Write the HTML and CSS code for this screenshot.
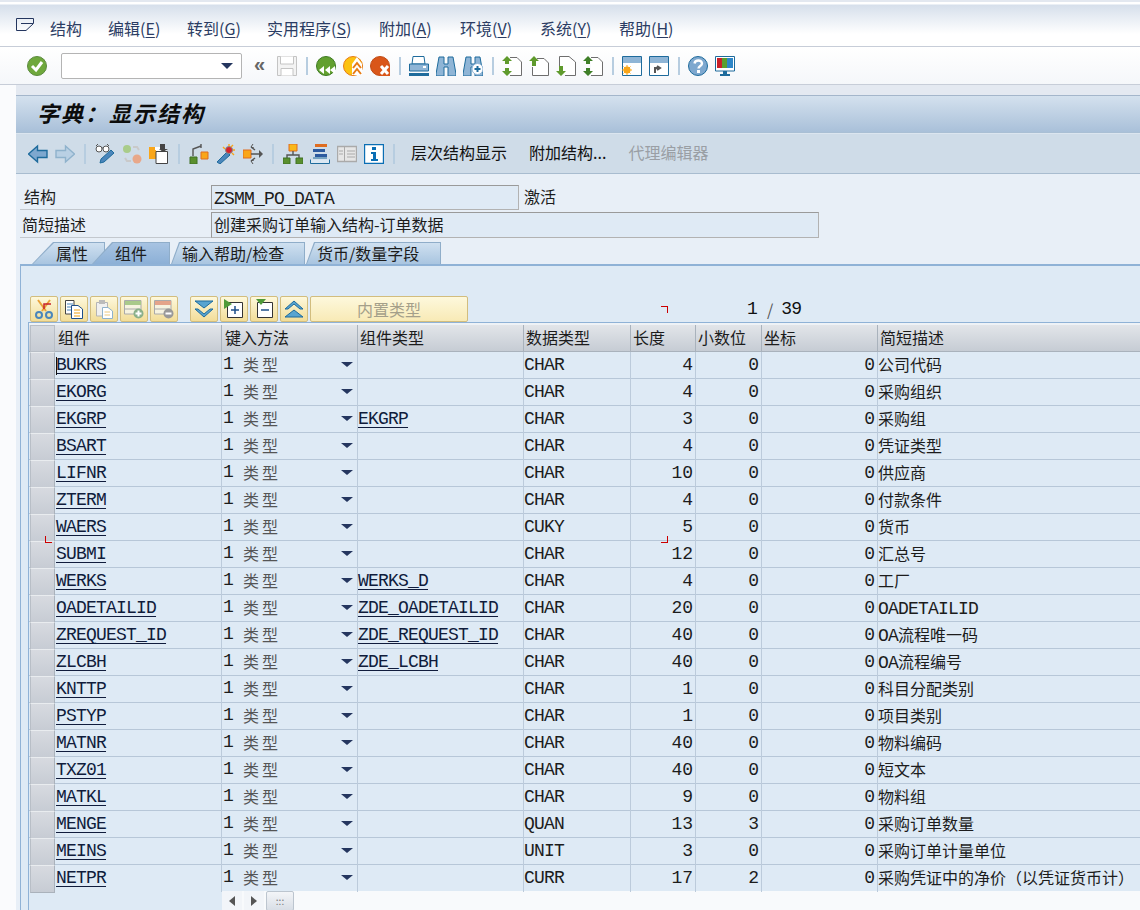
FILE: index.html
```html
<!DOCTYPE html>
<html lang="zh">
<head>
<meta charset="utf-8">
<title>字典：显示结构</title>
<link rel="stylesheet" href="styles.css">
</head>
<body>
<div class="app">
  <header class="menubar">
    <svg class="menu-icon" viewBox="0 0 18 14"><path d="M.5.5H17.500V5.500L10 12.500H.5ZM5 5.500H17" fill="none" stroke="#24365f"/></svg>
    <nav class="menu">
      <span>结构</span>
      <span>编辑(<u>E</u>)</span>
      <span>转到(<u>G</u>)</span>
      <span>实用程序(<u>S</u>)</span>
      <span>附加(<u>A</u>)</span>
      <span>环境(<u>V</u>)</span>
      <span>系统(<u>Y</u>)</span>
      <span>帮助(<u>H</u>)</span>
    </nav>
  </header>
  <div class="systool">
    <svg class="ic first" viewBox="0 0 20 20"><circle cx="10" cy="10" r="9.500" fill="#6fa83c" stroke="#5b8a3e"/><path d="M5 10l4 4 6-8" fill="none" stroke="#fff" stroke-width="3"/></svg>
    <div class="cmd"><svg class="caret" viewBox="0 0 12 6"><path d="M0 0H12L6 6Z" fill="#24365f"/></svg></div>
    <span class="chev">«</span>
    <svg class="ic" viewBox="0 0 20 20"><path d="M.5.5H19.500V19.500H.5Z" fill="#f3f3f3" stroke="#c4c4c4"/><path d="M3.500.5V8H16.500V.5M4 19.500V12.500H16V19.500" fill="#fff" stroke="#c4c4c4"/></svg>
    <i class="sep"></i>
    <svg class="ic" viewBox="0 0 20 20"><circle cx="10" cy="10" r="9.500" fill="#62a02f" stroke="#3d7a22"/><path d="M3 14l5-4v8ZM9 14l5-4v8ZM14 14l5-4v8Z" fill="#fff"/></svg>
    <svg class="ic" viewBox="0 0 20 20"><circle cx="10" cy="10" r="9.500" fill="#fcc211" stroke="#e77b14"/><path d="M14 1l5 7v11H9V8Z" fill="#fff"/><path d="M10 12l4-5 4 5M10 18l4-5 4 5" fill="none" stroke="#e77b14" stroke-width="2"/></svg>
    <svg class="ic" viewBox="0 0 20 20"><circle cx="10" cy="10" r="9.500" fill="#d9561a" stroke="#c04a12"/><path d="M9.500 9.500H20V20H9.500Z" fill="#d9561a"/><path d="M11 10l7 8M18 10l-7 8" stroke="#fff" stroke-width="3"/></svg>
    <i class="sep"></i>
    <svg class="ic" viewBox="0 0 20 20"><path d="M4 .5H15L16 8H3Z" fill="#fff" stroke="#1e6b9c"/><path d="M.5 8H19.500V15H.5Z" fill="#8fb5d6" stroke="#1e6b9c"/><path d="M0 17H20V20H0Z" fill="#1e6b9c"/><path d="M14 10h3v2h-3Z" fill="#fff"/></svg>
    <svg class="ic" viewBox="0 0 20 20"><path d="M3 1h5v7h4V1h5l3 17v2h-8V11H8v9H0v-2Z" fill="#8fb5d6" stroke="#1e6b9c"/></svg>
    <svg class="ic" viewBox="0 0 20 20"><path d="M3 1h5v7h4V1h5l3 17v2h-8V11H8v9H0v-2Z" fill="#8fb5d6" stroke="#1e6b9c"/><circle cx="14.500" cy="13" r="5.500" fill="#fff" stroke="#8fb5d6"/><path d="M11.500 13h6M14.500 10v6" stroke="#1e6b9c" stroke-width="2"/></svg>
    <i class="sep"></i>
    <svg class="ic" viewBox="0 0 20 20"><path d="M8 1.500H15L19.500 6V19.500H8" fill="#fff" stroke="#6e6e6e"/><path d="M5 0l5 5H7v3H3V5H0Z M5 20l5-5H7v-3H3v3H0Z" fill="#5f9a2c"/></svg>
    <svg class="ic" viewBox="0 0 20 20"><path d="M8 2.500H15L19.500 7V19.500H3.500V11" fill="#fff" stroke="#6e6e6e"/><path d="M5 0l5 5H7v5H3V5H0Z" fill="#5f9a2c"/></svg>
    <svg class="ic" viewBox="0 0 20 20"><path d="M3.500 10V.5H13L19.500 6V19.500H9" fill="#fff" stroke="#6e6e6e"/><path d="M5 20l5-5H7v-5H3v5H0Z" fill="#5f9a2c"/></svg>
    <svg class="ic" viewBox="0 0 20 20"><path d="M8 1.500H15L19.500 6V19.500H8" fill="#fff" stroke="#6e6e6e"/><path d="M5 0l5 5H7v3H3V5H0Z M5 20l5-5H7v-3H3v3H0Z" fill="#3f7f28"/></svg>
    <i class="sep"></i>
    <svg class="ic" viewBox="0 0 20 20"><path d="M.5.5H19.500V19.500H.5Z" fill="#fff" stroke="#1e6b9c"/><path d="M1 1H19V7H1Z" fill="#8fb5d6"/><circle cx="5" cy="14" r="3.500" fill="#f9a61a"/><path d="M0 14H10M5 9V19M1.500 10.500l7 7M8.500 10.500l-7 7" stroke="#f9a61a"/></svg>
    <svg class="ic" viewBox="0 0 20 20"><path d="M.5.5H19.500V19.500H.5Z" fill="#fff" stroke="#1e6b9c"/><path d="M1 1H19V7H1Z" fill="#8fb5d6"/><path d="M6 17v-5h4M8 10l3 2-3 2" fill="none" stroke="#555" stroke-width="2"/></svg>
    <i class="sep"></i>
    <svg class="ic" viewBox="0 0 20 20"><circle cx="10" cy="10" r="9.500" fill="#7ea8cf" stroke="#1e6b9c"/><path d="M6.500 7.500C7 3.500 14 3.500 14 7.500 14 10 10.500 10 10.500 12.500" fill="none" stroke="#fff" stroke-width="2.400"/><path d="M9 14h3v3H9Z" fill="#fff"/></svg>
    <svg class="ic" viewBox="0 0 20 20"><path d="M.5.5H19.500V15H.5Z" fill="#fff" stroke="#1e6b9c"/><path d="M2 2H7V12H2Z" fill="#c8202a"/><path d="M7 2H12V12H7Z" fill="#5a9e2e"/><path d="M12 2H18V12H12Z" fill="#2d86c8"/><path d="M8 15H12V18H15V20H5V18H8Z" fill="#1e6b9c"/></svg>
  </div>
  <div class="band"></div>
  <main class="main">
    <h1 class="title">字典：显示结构</h1>
    <div class="apptool">
      <svg class="ic" viewBox="0 0 20 20"><path d="M.5 10L9.500 2V6.500H19V13.500H9.500V18Z" fill="#7ea8cf" stroke="#1e6b9c" stroke-width="1.400"/></svg>
      <svg class="ic" viewBox="0 0 20 20"><path d="M19.500 10L10.500 2V6.500H1V13.500H10.500V18Z" fill="#b9d0e4" stroke="#8fb2cc" stroke-width="1.400"/></svg>
      <i class="sep"></i>
      <svg class="ic" viewBox="0 0 20 20"><circle cx="4" cy="5" r="3" fill="#fff" stroke="#555"/><circle cx="11" cy="5" r="3" fill="#fff" stroke="#555"/><path d="M7 4h1M1 2l2-2M14 2l-2-2" stroke="#555"/><path d="M5 19l1-4L16 6l3 3L9 18Z" fill="#4b86bb" stroke="#1e6b9c"/></svg>
      <svg class="ic" viewBox="0 0 20 20"><circle cx="5" cy="5" r="4" fill="#a9cc8a"/><circle cx="15" cy="15" r="4.500" fill="#e8a88a"/><path d="M11 3h4l2 3M9 17H5l-2-3" fill="none" stroke="#c9c9c9" stroke-width="2"/></svg>
      <svg class="ic" viewBox="0 0 20 20"><path d="M0 3H12V15H0Z" fill="#f9a61a"/><path d="M3 6H6V3H12.500L17.500 6V19.500H7V6Z" fill="#fff"/><path d="M7 7.500H18.500V19.500H7Z" fill="#fff" stroke="#444"/><path d="M11 0h5v5h3l-5 3-4-3h1Z" fill="#444"/></svg>
      <i class="sep"></i>
      <svg class="ic" viewBox="0 0 20 20"><path d="M1 13H8V20H1Z" fill="#5a8f2e" stroke="#3f7024"/><path d="M12 8H19V15H12Z" fill="#f9a61a" stroke="#df6d20"/><path d="M4 12V5L12 2M12 0v4" fill="none" stroke="#555" stroke-width="1.400"/></svg>
      <svg class="ic" viewBox="0 0 20 20"><path d="M1 18L11 8l3 3L4 20Z" fill="#4b86bb" stroke="#1e6b9c"/><circle cx="13" cy="6" r="3.500" fill="#d8232a" stroke="#888"/><path d="M13 0V2M7 3l2 2M19 6H17M17 1l-2 2M18 11l-2-2" stroke="#f9a61a" stroke-width="1.400"/></svg>
      <svg class="ic" viewBox="0 0 20 20"><path d="M0 6H8V14H0Z" fill="#f9a61a" stroke="#df6d20"/><path d="M8 10H17M8 3l4 3M8 17l4-3" stroke="#555" stroke-width="1.500"/><path d="M16 6l4 4-4 4Z" fill="#555"/><path d="M10 0l-2 3 3 1M10 20l-2-3 3-1" fill="none" stroke="#555"/></svg>
      <i class="sep"></i>
      <svg class="ic" viewBox="0 0 20 20"><path d="M6 0H14V7H6Z" fill="#f9b81a" stroke="#df6d20"/><path d="M10 7V11M4 14V11H16V14" fill="none" stroke="#555" stroke-width="1.400"/><path d="M0 14H7V20H0ZM13 14H20V20H13Z" fill="#5a8f2e" stroke="#3f7024"/></svg>
      <svg class="ic" viewBox="0 0 20 20"><path d="M5 0H17V3H5Z" fill="#df6d20"/><path d="M3 5H15V8H3ZM5 10H17V13H5Z" fill="#2d5a9e"/><path d="M.5 15.500V19.500H19.500V15.500M3 14H17" fill="#dbe8f3" stroke="#1e6b9c"/></svg>
      <svg class="ic" viewBox="0 0 20 20"><path d="M.5 2.500H19.500V17.500H.5Z" fill="#e6e6e6" stroke="#aaa" stroke-width="1.400"/><path d="M7.500 3V17M2 7H6M2 10H6M10 7H18M10 10H18M10 13H18" stroke="#aaa"/></svg>
      <svg class="ic" viewBox="0 0 20 20"><path d="M.5.5H19.500V19.500H.5Z" fill="#fff" stroke="#0a6eb4" stroke-width="1.400"/><path d="M8 3H12V6H8ZM7 8H12V15H14V17H7V15H9V10H7Z" fill="#0a6eb4"/></svg>
      <i class="sep"></i>
      <span class="tbtn first-text">层次结构显示</span>
      <span class="tbtn">附加结构...</span>
      <span class="tbtn off">代理编辑器</span>
    </div>
    <section class="form">
      <div class="frow">
        <label class="lab lab-a">结构</label>
        <div class="field f-short"><span class="mono">ZSMM_PO_DATA</span></div>
        <span class="status">激活</span>
      </div>
      <div class="frow frow-b">
        <label class="lab">简短描述</label>
        <div class="field f-long">创建采购订单输入结构-订单数据</div>
      </div>
    </section>
    <div class="tabs">
      <div class="tab t1"><span>属性</span></div>
      <div class="tab t2 on"><span>组件</span></div>
      <div class="tab t3"><span>输入帮助/检查</span></div>
      <div class="tab t4"><span>货币/数量字段</span></div>
    </div>
    <section class="panel">
      <div class="tabletool">
        <div class="tb"><svg viewBox="0 0 20 20"><path d="M4 1l8 11M16 1L8 12" stroke="#e9a33a" stroke-width="2"/><circle cx="5" cy="16" r="3" fill="none" stroke="#4b86bb" stroke-width="2"/><circle cx="15" cy="16" r="3" fill="none" stroke="#4b86bb" stroke-width="2"/><path d="M10 10V5H17" fill="none" stroke="#c8202a" stroke-width="1.500"/></svg></div>
        <div class="tb"><svg viewBox="0 0 20 20"><path d="M1.500 1.500H10V15H1.500Z" fill="#fff" stroke="#444"/><path d="M3 5H9M3 8H9M3 11H9" stroke="#4b86bb"/><path d="M7.500 6.500H14L18.500 10V19.500H7.500Z" fill="#fff" stroke="#1e4f8a"/><path d="M10 11H16M10 14H16M10 17H16" stroke="#f0a010"/></svg></div>
        <div class="tb"><svg viewBox="0 0 20 20"><path d="M2.500 3.500H13.500V17H2.500Z" fill="#f0f0f0" stroke="#b5b5b5"/><path d="M5 1H11V5H5Z" fill="#bbb"/><path d="M8.500 8.500H14L18.500 12V19.500H8.500Z" fill="#fff" stroke="#8fb2cc"/><path d="M10.500 13H16M10.500 16H16" stroke="#edc87c"/></svg></div>
        <div class="tb"><svg viewBox="0 0 20 20"><path d="M.5 1.500H17V15H.5Z" fill="#f6f3e0" stroke="#aaa"/><path d="M1 2H17V6H1Z" fill="#a9c98a"/><path d="M1 10H16" stroke="#aaa"/><circle cx="14.500" cy="14.500" r="5" fill="#8ab08a"/><path d="M11.500 14.500H17.500M14.500 11.500V17.500" stroke="#fff" stroke-width="2"/></svg></div>
        <div class="tb"><svg viewBox="0 0 20 20"><path d="M.5 1.500H17V15H.5Z" fill="#f6f3e0" stroke="#aaa"/><path d="M1 2H17V6H1Z" fill="#e4a48a"/><path d="M1 10H16" stroke="#aaa"/><circle cx="14.500" cy="14.500" r="5" fill="#999"/><path d="M11.500 14.500H17.500" stroke="#fff" stroke-width="2"/></svg></div>
        <div class="tb tb-gap"><svg viewBox="0 0 20 20"><path d="M1 2H19L10 9Z" fill="#58a4d0" stroke="#1e6b9c"/><path d="M4 10L10 15 16 10 19 10 10 18 1 10Z" fill="#58a4d0" stroke="#1e6b9c"/></svg></div>
        <div class="tb"><svg viewBox="0 0 20 20"><path d="M3.500 3.500H18.500V18.500H3.500Z" fill="#fff" stroke="#333"/><path d="M7 11H15M11 7V15" stroke="#1e4f8a" stroke-width="1.500"/><path d="M0 0L8 5 0 10Z" fill="#4f9a38"/></svg></div>
        <div class="tb"><svg viewBox="0 0 20 20"><path d="M3.500 3.500H18.500V18.500H3.500Z" fill="#fff" stroke="#333"/><path d="M7 11H15" stroke="#1e4f8a" stroke-width="1.500"/><path d="M2 0H12L7 6Z" fill="#4f9a38"/></svg></div>
        <div class="tb"><svg viewBox="0 0 20 20"><path d="M1 18H19L10 11Z" fill="#58a4d0" stroke="#1e6b9c"/><path d="M4 10L10 5 16 10 19 10 10 2 1 10Z" fill="#58a4d0" stroke="#1e6b9c"/></svg></div>
        <div class="tb tb-text">内置类型</div>
        <span class="pager"><span class="mono">1</span><span class="slash">/</span><span class="mono">39</span></span>
      </div>
      <div class="grid-wrap">
        <div class="grid">
          <div class="row head">
            <div class="sel"></div><div class="c">组件</div><div class="c">键入方法</div><div class="c">组件类型</div><div class="c">数据类型</div><div class="c">长度</div><div class="c">小数位</div><div class="c">坐标</div><div class="c last">简短描述</div>
          </div>
          <div class="row"><div class="sel"></div><div class="c"><a class="mono lnk">BUKRS</a></div><div class="c kind"><span class="mono">1</span><span class="kt">类型</span><i class="dd"></i></div><div class="c"></div><div class="c mono">CHAR</div><div class="c num">4</div><div class="c num">0</div><div class="c num">0</div><div class="c last">公司代码</div></div>
          <div class="row"><div class="sel"></div><div class="c"><a class="mono lnk">EKORG</a></div><div class="c kind"><span class="mono">1</span><span class="kt">类型</span><i class="dd"></i></div><div class="c"></div><div class="c mono">CHAR</div><div class="c num">4</div><div class="c num">0</div><div class="c num">0</div><div class="c last">采购组织</div></div>
          <div class="row"><div class="sel"></div><div class="c"><a class="mono lnk">EKGRP</a></div><div class="c kind"><span class="mono">1</span><span class="kt">类型</span><i class="dd"></i></div><div class="c"><a class="mono lnk">EKGRP</a></div><div class="c mono">CHAR</div><div class="c num">3</div><div class="c num">0</div><div class="c num">0</div><div class="c last">采购组</div></div>
          <div class="row"><div class="sel"></div><div class="c"><a class="mono lnk">BSART</a></div><div class="c kind"><span class="mono">1</span><span class="kt">类型</span><i class="dd"></i></div><div class="c"></div><div class="c mono">CHAR</div><div class="c num">4</div><div class="c num">0</div><div class="c num">0</div><div class="c last">凭证类型</div></div>
          <div class="row"><div class="sel"></div><div class="c"><a class="mono lnk">LIFNR</a></div><div class="c kind"><span class="mono">1</span><span class="kt">类型</span><i class="dd"></i></div><div class="c"></div><div class="c mono">CHAR</div><div class="c num">10</div><div class="c num">0</div><div class="c num">0</div><div class="c last">供应商</div></div>
          <div class="row"><div class="sel"></div><div class="c"><a class="mono lnk">ZTERM</a></div><div class="c kind"><span class="mono">1</span><span class="kt">类型</span><i class="dd"></i></div><div class="c"></div><div class="c mono">CHAR</div><div class="c num">4</div><div class="c num">0</div><div class="c num">0</div><div class="c last">付款条件</div></div>
          <div class="row"><div class="sel"></div><div class="c"><a class="mono lnk">WAERS</a></div><div class="c kind"><span class="mono">1</span><span class="kt">类型</span><i class="dd"></i></div><div class="c"></div><div class="c mono">CUKY</div><div class="c num">5</div><div class="c num">0</div><div class="c num">0</div><div class="c last">货币</div></div>
          <div class="row"><div class="sel"></div><div class="c"><a class="mono lnk">SUBMI</a></div><div class="c kind"><span class="mono">1</span><span class="kt">类型</span><i class="dd"></i></div><div class="c"></div><div class="c mono">CHAR</div><div class="c num">12</div><div class="c num">0</div><div class="c num">0</div><div class="c last">汇总号</div></div>
          <div class="row"><div class="sel"></div><div class="c"><a class="mono lnk">WERKS</a></div><div class="c kind"><span class="mono">1</span><span class="kt">类型</span><i class="dd"></i></div><div class="c"><a class="mono lnk">WERKS_D</a></div><div class="c mono">CHAR</div><div class="c num">4</div><div class="c num">0</div><div class="c num">0</div><div class="c last">工厂</div></div>
          <div class="row"><div class="sel"></div><div class="c"><a class="mono lnk">OADETAILID</a></div><div class="c kind"><span class="mono">1</span><span class="kt">类型</span><i class="dd"></i></div><div class="c"><a class="mono lnk">ZDE_OADETAILID</a></div><div class="c mono">CHAR</div><div class="c num">20</div><div class="c num">0</div><div class="c num">0</div><div class="c last"><span class="mono">OADETAILID</span></div></div>
          <div class="row"><div class="sel"></div><div class="c"><a class="mono lnk">ZREQUEST_ID</a></div><div class="c kind"><span class="mono">1</span><span class="kt">类型</span><i class="dd"></i></div><div class="c"><a class="mono lnk">ZDE_REQUEST_ID</a></div><div class="c mono">CHAR</div><div class="c num">40</div><div class="c num">0</div><div class="c num">0</div><div class="c last"><span class="mono">OA</span>流程唯一码</div></div>
          <div class="row"><div class="sel"></div><div class="c"><a class="mono lnk">ZLCBH</a></div><div class="c kind"><span class="mono">1</span><span class="kt">类型</span><i class="dd"></i></div><div class="c"><a class="mono lnk">ZDE_LCBH</a></div><div class="c mono">CHAR</div><div class="c num">40</div><div class="c num">0</div><div class="c num">0</div><div class="c last"><span class="mono">OA</span>流程编号</div></div>
          <div class="row"><div class="sel"></div><div class="c"><a class="mono lnk">KNTTP</a></div><div class="c kind"><span class="mono">1</span><span class="kt">类型</span><i class="dd"></i></div><div class="c"></div><div class="c mono">CHAR</div><div class="c num">1</div><div class="c num">0</div><div class="c num">0</div><div class="c last">科目分配类别</div></div>
          <div class="row"><div class="sel"></div><div class="c"><a class="mono lnk">PSTYP</a></div><div class="c kind"><span class="mono">1</span><span class="kt">类型</span><i class="dd"></i></div><div class="c"></div><div class="c mono">CHAR</div><div class="c num">1</div><div class="c num">0</div><div class="c num">0</div><div class="c last">项目类别</div></div>
          <div class="row"><div class="sel"></div><div class="c"><a class="mono lnk">MATNR</a></div><div class="c kind"><span class="mono">1</span><span class="kt">类型</span><i class="dd"></i></div><div class="c"></div><div class="c mono">CHAR</div><div class="c num">40</div><div class="c num">0</div><div class="c num">0</div><div class="c last">物料编码</div></div>
          <div class="row"><div class="sel"></div><div class="c"><a class="mono lnk">TXZ01</a></div><div class="c kind"><span class="mono">1</span><span class="kt">类型</span><i class="dd"></i></div><div class="c"></div><div class="c mono">CHAR</div><div class="c num">40</div><div class="c num">0</div><div class="c num">0</div><div class="c last">短文本</div></div>
          <div class="row"><div class="sel"></div><div class="c"><a class="mono lnk">MATKL</a></div><div class="c kind"><span class="mono">1</span><span class="kt">类型</span><i class="dd"></i></div><div class="c"></div><div class="c mono">CHAR</div><div class="c num">9</div><div class="c num">0</div><div class="c num">0</div><div class="c last">物料组</div></div>
          <div class="row"><div class="sel"></div><div class="c"><a class="mono lnk">MENGE</a></div><div class="c kind"><span class="mono">1</span><span class="kt">类型</span><i class="dd"></i></div><div class="c"></div><div class="c mono">QUAN</div><div class="c num">13</div><div class="c num">3</div><div class="c num">0</div><div class="c last">采购订单数量</div></div>
          <div class="row"><div class="sel"></div><div class="c"><a class="mono lnk">MEINS</a></div><div class="c kind"><span class="mono">1</span><span class="kt">类型</span><i class="dd"></i></div><div class="c"></div><div class="c mono">UNIT</div><div class="c num">3</div><div class="c num">0</div><div class="c num">0</div><div class="c last">采购订单计量单位</div></div>
          <div class="row end"><div class="sel"></div><div class="c"><a class="mono lnk">NETPR</a></div><div class="c kind"><span class="mono">1</span><span class="kt">类型</span><i class="dd"></i></div><div class="c"></div><div class="c mono">CURR</div><div class="c num">17</div><div class="c num">2</div><div class="c num">0</div><div class="c last">采购凭证中的净价（以凭证货币计）</div></div>
          <i class="mark m-tr"></i><i class="mark m-br"></i><i class="mark m-bl"></i><i class="cursor"></i>
        </div>
        <div class="hscroll">
          <span class="sb"><i class="ar-l"></i></span>
          <span class="sb"><i class="ar-r"></i></span>
          <span class="thumb">:::</span>
        </div>
      </div>
    </section>
  </main>
</div>
</body>
</html>
```
FILE: styles.css
```css
* { box-sizing: border-box; }
html, body { margin: 0; height: 100%; }
body {
  width: 1140px; height: 910px; overflow: hidden; background: #fafbfd;
  font-family: "Noto Sans CJK SC", "Liberation Sans", sans-serif;
  font-size: 16px; color: #1c1c1c;
}
.app { display: flex; flex-direction: column; height: 910px; overflow: hidden; }
.mono { font-family: "Liberation Mono", "Noto Sans CJK SC", monospace; font-size: 18px; letter-spacing: -.8px; }

.menubar {
  height: 47px; display: flex; align-items: center; padding: 8px 0 0 16px; flex: none;
  border-top: 2px solid #e3e8f0; border-bottom: 1px solid #c7cdd8;
  background: linear-gradient(#fff 0 2px, #d6dfeb 3px, #eef2f7 20px, #fff 32px);
}
.menu-icon { width: 18px; height: 14px; margin: -6px 16px 0 0; flex: none; }
.menu { display: flex; gap: 26px; color: #2b3c63; line-height: 20px; margin-top: -1px; }
.menu span:nth-child(1) { min-width: 32px; }
.menu span:nth-child(2) { min-width: 53px; }
.menu span:nth-child(3) { min-width: 54px; }
.menu span:nth-child(4) { min-width: 86px; }
.menu span:nth-child(5) { min-width: 55px; }
.menu span:nth-child(6) { min-width: 54px; }
.menu span:nth-child(7) { min-width: 53px; }
.menu u { text-underline-offset: 2px; }

.ic { width: 20px; height: 20px; flex: none; display: block; }
.sep { width: 2px; height: 18px; background: #b7cde0; flex: none; }
.systool {
  height: 38px; flex: none; display: flex; align-items: center; gap: 7px; padding-left: 27px;
  border-bottom: 1px solid #c7cdd8;
  background: linear-gradient(#fff, #f5f7fa);
}
.systool .sep { margin: 0 1px 0 2px; }
.cmd {
  width: 181px; height: 26px; margin-left: 7px; background: #fff; border: 1px solid #b4b4b4; border-radius: 2px;
  display: flex; align-items: center; justify-content: flex-end; padding-right: 8px;
}
.caret { width: 12px; height: 6px; }
.chev { width: 13px; margin: -3px 4px 0 4px; font-size: 20px; line-height: 20px; color: #666; font-family: "Liberation Sans", sans-serif; font-weight: bold; text-align: center; }
.band { height: 10px; flex: none; background: linear-gradient(90deg, #fafbfd 16px, #e4e9f1 16px); }

.main { flex: 1; margin-left: 16px; background: #e8eff7; min-height: 0; display: flex; flex-direction: column; }
.title {
  height: 38px; margin: 0; flex: none; padding-left: 21px; line-height: 32px; font-size: 22px; font-weight: bold; font-style: italic; letter-spacing: 2px; color: #0c0c0c;
  border-top: 1px solid #a4b6cb; border-bottom: 1px solid #a9bfd4;
  background: linear-gradient(#d4e1ee, #a9c0d9);
}
.apptool {
  height: 41px; flex: none; display: flex; align-items: center; gap: 7px; padding: 1px 0 0 12px;
  background: #cfdce8; border-top: 1px solid #dbe5ef; border-bottom: 1px solid #a8bccf;
}
.apptool .sep { margin: 0 2px 0 2px; height: 20px; }
.tbtn { margin: -4px 0 0 15px; color: #111; line-height: 20px; }
.first-text { margin-left: 7px; }
.off { color: #9a9fa5; }

.form { padding: 11px 0 0 4px; flex: none; }
.frow { display: flex; height: 25px; }
.frow-b { height: 26px; margin-top: 2px; }
.lab { width: 191px; flex: none; padding-left: 2px; line-height: 25px; border-bottom: 1px solid #c3c8ce; }
.lab-a { padding-left: 4px; line-height: 23px; }
.field {
  height: 100%; line-height: 23px; padding-left: 2px; background: #dfeaf5;
  border: 1px solid #b2b2b2; border-top-color: #9a9a9a; border-left-color: #9a9a9a; white-space: nowrap;
}
.f-short { width: 308px; }
.f-long { width: 608px; }
.status { margin-left: 5px; line-height: 23px; }

.tabs { display: flex; height: 22px; margin: 4px 0 0 16px; flex: none; position: relative; z-index: 1; }
.tab { position: relative; background: #8fadc9; display: flex; align-items: center; line-height: 20px; }
.tab::before { content: ""; position: absolute; inset: 1px 1px 0 1px; background: linear-gradient(#cfe0f0, #a9c5e0); }
.tab span { position: relative; }
.t1 { width: 73px; padding-left: 24px; clip-path: polygon(0 100%, 21px 0, 100% 0, 100% 100%); }
.t1::before { clip-path: polygon(0 100%, 21px 0, 100% 0, 100% 100%); }
.t2 { width: 78px; margin-left: -13px; padding-left: 23px; clip-path: polygon(0 100%, 20px 0, 100% 0, 100% 100%); z-index: 1; }
.t2::before { clip-path: polygon(0 100%, 20px 0, 100% 0, 100% 100%); background: linear-gradient(#a7c3e2, #8cb0d6); }
.t3 { width: 134px; margin-left: 1px; padding-left: 11px; clip-path: polygon(0 100%, 8px 0, 100% 0, 100% 100%); }
.t3::before { clip-path: polygon(0 100%, 8px 0, 100% 0, 100% 100%); }
.t4 { width: 135px; margin-left: 1px; padding-left: 11px; clip-path: polygon(0 100%, 8px 0, 100% 0, 100% 100%); }
.t4::before { clip-path: polygon(0 100%, 8px 0, 100% 0, 100% 100%); }

.panel { flex: 1; margin-left: 4px; min-height: 0; background: #deeaf5; border-top: 2px solid #8fb2d6; border-left: 1px solid #8fb2d6; padding: 30px 0 0 7px; display: flex; flex-direction: column; position: relative; }
.tabletool { height: 26px; flex: none; display: flex; gap: 2px; padding-left: 2px; align-items: stretch; }
.tb {
  width: 28px; display: flex; align-items: center; justify-content: center;
  background: linear-gradient(#fdf8dc, #f2dd98); border: 1px solid #d2bd7e; border-radius: 2px;
}
.tb svg { width: 20px; height: 20px; display: block; }
.tb-gap { margin-left: 10px; }
.tb-text { width: 158px; color: #a49f8a; line-height: 20px; background: linear-gradient(#fdf8dc, #f8eab6); }
.pager { position: absolute; left: 726px; top: 30px; height: 26px; line-height: 26px; display: flex; color: #111; }
.slash { margin: 0 8px 0 10px; color: #555; }

.grid-wrap { flex: 1; min-height: 0; border-left: 1px solid #8fb2d6; display: flex; flex-direction: column; }
.grid { border-top: 1px solid #8fb2d6; padding-top: 2px; background: linear-gradient(#eef2f6 2px, transparent 2px); flex: none; position: relative; }
.row {
  display: grid; height: 27px;
  grid-template-columns: 26px 167px 136px 166px 107px 65px 66px 116px 1fr;
  border-bottom: 1px solid #b7c7d8; line-height: 25px; white-space: nowrap;
}
.row.end { height: 26px; border-bottom: 0; }
.row.head { background: linear-gradient(#e2e5e9, #c6ccd4); border-bottom: 1px solid #a9b2bc; height: 27px; }
.c { padding-left: 1px; border-right: 1px solid #bccbdb; overflow: visible; min-width: 0; }
.c:nth-child(n+4) { padding-left: 0; }
.head .c { padding-left: 3px; border-right-color: #a9b2bc; }
.head .c:nth-child(n+4) { padding-left: 2px; }
.last { border-right: 0; }
.head .last { padding-left: 2px; }
.c.mono { line-height: 27px; }
.num { text-align: right; padding-right: 2px; font-family: "Liberation Mono", monospace; font-size: 18px; line-height: 27px; }
.lnk { color: #101c3c; text-decoration: underline; text-underline-offset: 3px; position: relative; top: -1px; }
.sel { background: linear-gradient(#d7dae0, #c7ccd4); border: 1px solid #aab2bb; border-top-color: #e9ecef; border-left-color: #b8bec6; margin: 0 0 -1px 1px; }
.head .sel { background: linear-gradient(#d6dae0, #c6cbd3); border-color: #b8bec6; }
.kind { display: flex; align-items: flex-start; position: relative; }
.kt { margin-left: 10px; letter-spacing: 3px; color: #555; }
.dd { position: absolute; right: 4px; top: 10px; width: 0; height: 0; border: 6px solid transparent; border-top: 5px solid #24365f; border-bottom: 0; }

.mark { position: absolute; width: 7px; height: 7px; }
.m-tr { left: 632px; top: -17px; border-top: 1px solid #c00; border-right: 1px solid #c00; }
.m-br { left: 632px; top: 213px; border-bottom: 1px solid #c00; border-right: 1px solid #c00; }
.m-bl { left: 16px; top: 213px; border-bottom: 1px solid #c00; border-left: 1px solid #c00; }
.cursor { position: absolute; left: 27px; top: 34px; width: 1px; height: 18px; background: #111; }

.hscroll { flex: 1; margin-left: 193px; background: #f8fafc; display: flex; align-items: stretch; gap: 2px; }
.sb { width: 20px; background: #f2f5f9; display: flex; align-items: center; justify-content: center; }
.ar-l { width: 0; height: 0; border: 5px solid transparent; border-right: 6px solid #555; border-left: 0; }
.ar-r { width: 0; height: 0; border: 5px solid transparent; border-left: 6px solid #555; border-right: 0; }
.thumb { width: 28px; border: 1px solid #bcc5cf; background: linear-gradient(#f3f5f8, #d8dee6); border-radius: 2px; font-size: 10px; line-height: 18px; text-align: center; color: #777; }
```
